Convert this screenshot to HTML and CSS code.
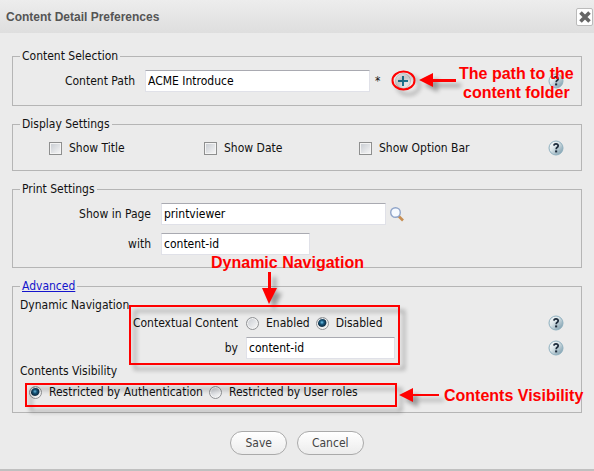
FILE: index.html
```html
<!DOCTYPE html>
<html lang="en">
<head>
<meta charset="utf-8">
<title>Content Detail Preferences</title>
<link rel="stylesheet" href="styles.css">
</head>
<body>
<svg class="defs" width="0" height="0" aria-hidden="true">
  <defs>
    <linearGradient id="ball" x1="0" y1="0" x2="1" y2="1">
      <stop offset="0" stop-color="#fff"/><stop offset=".4" stop-color="#dce6ea"/><stop offset="1" stop-color="#6d91a3"/>
    </linearGradient>
    <symbol id="help" viewBox="0 0 16 16">
      <circle cx="8" cy="8" r="7" fill="url(#ball)" stroke="#8fb0bf"/>
      <path d="M5.9 5.6Q6 3.9 8 3.9T10.2 5.7Q10.2 6.8 9 7.5Q8.2 8 8.2 9.3" fill="none" stroke="#1c2a3a" stroke-width="1.7"/>
      <rect x="7.1" y="10.4" width="2.1" height="2" fill="#1c2a3a"/>
    </symbol>
  </defs>
</svg>
<main class="dialog">
  <header class="titlebar">
    <h1>Content Detail Preferences</h1>
    <button class="close" type="button" aria-label="Close">
      <svg width="12" height="12" viewBox="0 0 12 12"><path d="M1.500 1.500L10.500 10.500M10.500 1.500L1.500 10.500" stroke="#666" stroke-width="3.6"/></svg>
    </button>
  </header>
  <form class="body">
    <fieldset>
      <legend>Content Selection</legend>
      <div class="row">
        <label class="label" for="path">Content Path</label>
        <input class="text wide" id="path" type="text" value="ACME Introduce">
        <span class="required">*</span>
        <button class="icon add" type="button" aria-label="Select path">
          <svg width="18" height="18" viewBox="0 0 18 18"><circle cx="9" cy="9" r="7.5" fill="#e2e2e2" stroke="#c4c4c4"/><path d="M9 4V14M4 9H14" stroke="#1d7590" stroke-width="2"/></svg>
        </button>
        <button class="icon help" type="button" aria-label="Help"><svg width="16" height="16"><use href="#help"/></svg></button>
      </div>
    </fieldset>
    <fieldset class="display">
      <legend>Display Settings</legend>
      <div class="row checks">
        <label class="check"><input type="checkbox">Show Title</label>
        <label class="check"><input type="checkbox">Show Date</label>
        <label class="check"><input type="checkbox">Show Option Bar</label>
        <button class="icon help" type="button" aria-label="Help"><svg width="16" height="16"><use href="#help"/></svg></button>
      </div>
    </fieldset>
    <fieldset class="print">
      <legend>Print Settings</legend>
      <div class="row">
        <label class="label" for="page">Show in Page</label>
        <input class="text wide" id="page" type="text" value="printviewer">
        <button class="icon search" type="button" aria-label="Search">
          <svg width="16" height="16" viewBox="0 0 16 16"><path d="M9.5 10L14 14.5" stroke="#c78e52" stroke-width="2.6"/><circle cx="6.5" cy="6.5" r="4.8" fill="#f6faff" stroke="#90a5c9" stroke-width="1.4"/></svg>
        </button>
      </div>
      <div class="row">
        <label class="label" for="with">with</label>
        <input class="text narrow" id="with" type="text" value="content-id">
      </div>
    </fieldset>
    <fieldset class="advanced">
      <legend><a href="#advanced">Advanced</a></legend>
      <h2>Dynamic Navigation</h2>
      <div class="row context">
        <span class="label">Contextual Content</span>
        <label class="radio"><input type="radio" name="context">Enabled</label>
        <label class="radio"><input type="radio" name="context" checked>Disabled</label>
        <button class="icon help" type="button" aria-label="Help"><svg width="16" height="16"><use href="#help"/></svg></button>
      </div>
      <div class="row">
        <label class="label" for="by">by</label>
        <input class="text narrow" id="by" type="text" value="content-id">
        <button class="icon help" type="button" aria-label="Help"><svg width="16" height="16"><use href="#help"/></svg></button>
      </div>
      <h2>Contents Visibility</h2>
      <div class="row visibility">
        <label class="radio"><input type="radio" name="visibility" checked>Restricted by Authentication</label>
        <label class="radio"><input type="radio" name="visibility">Restricted by User roles</label>
      </div>
    </fieldset>
    <div class="actions">
      <button class="btn" type="button">Save</button>
      <button class="btn" type="button">Cancel</button>
    </div>
  </form>
  <svg class="marks" width="594" height="471" viewBox="0 0 594 471" aria-hidden="true">
    <g fill="none" stroke="#f00" stroke-width="2">
      <ellipse cx="403.500" cy="80.500" rx="11" ry="9"/>
      <rect x="130" y="306" width="269" height="58"/>
      <rect x="26" y="384" width="370" height="22"/>
    </g>
    <g fill="#f00">
      <path d="M419 80L433 73V79H456V82H433V87Z"/>
      <path d="M269 304L262 288H268V272H271V288H277Z"/>
      <path d="M399 395L413 388V394H439V396H413V402Z"/>
    </g>
  </svg>
  <p class="note note-path">The path to the<br>content folder</p>
  <p class="note note-nav">Dynamic Navigation</p>
  <p class="note note-vis">Contents Visibility</p>
</main>
</body>
</html>
```
FILE: styles.css
```css
* { box-sizing: border-box; }
body {
  margin: 0;
  background: #ebebeb;
  color: #111;
  font: 12px/16px "DejaVu Sans Condensed", "Noto Sans", sans-serif;
}
.defs { position: absolute; }
.dialog {
  position: relative;
  min-height: 100vh;
  border-bottom: 2px solid #c0c0c0;
  overflow: hidden;
}
.titlebar {
  display: flex;
  align-items: center;
  justify-content: space-between;
  height: 33px;
  padding: 1px 1px 0 6px;
  background: linear-gradient(#ededed, #dedede);
}
h1 {
  margin: 0;
  color: #555;
  font: bold 12px/16px "Liberation Sans", sans-serif;
}
.close {
  display: grid;
  place-items: center;
  width: 17px;
  height: 18px;
  padding: 0;
  border: 1px solid #bbb;
  border-radius: 2px;
  background: #fff;
}
.body { padding: 15px 12px 0; }
fieldset {
  min-width: 0;
  margin: 0 0 10px;
  padding: 6px 17px 13px 7px;
  border: 1px solid #b5b5b5;
}
legend { padding: 0 2px; }
legend a { color: #1414cc; }
h2 { margin: 0; font: inherit; }
.row { display: flex; align-items: center; height: 22px; }
.label { width: 115px; margin-right: 10px; text-align: right; white-space: nowrap; }
.text {
  height: 22px;
  padding: 2px;
  border: 1px solid #e0e1e8;
  border-top-color: #a9aab1;
  background: #fff;
  color: #000;
  font: inherit;
}
.wide { width: 225px; }
.narrow { width: 149px; }
.required { width: 24px; padding-left: 5px; }
.icon { display: block; padding: 0; border: 0; background: none; }
.icon svg { display: block; }
.help { margin-left: auto; }
.display { padding-top: 5px; padding-bottom: 11px; }
.checks { padding-left: 29px; }
.check { display: flex; align-items: center; width: 155px; }
.check input {
  appearance: none;
  width: 13px;
  height: 13px;
  margin: 0 7px 0 0;
  border: 1px solid #8e8f8f;
  background: linear-gradient(135deg, #c6cad0, #f8f8f8);
  box-shadow: inset 0 0 0 1px #f4f4f4;
}
.print { padding-bottom: 12px; }
.print .label { width: 131px; }
.print .row + .row { margin-top: 8px; }
.search { margin-left: 3px; }
.advanced { padding-top: 3px; padding-bottom: 9px; margin-bottom: 18px; }
.advanced .label { width: 218px; margin-right: 8px; }
.context { height: 20px; margin-bottom: 4px; }
.row + h2 { margin-top: 4px; }
.visibility { margin-top: 2px; padding-left: 9px; }
.radio { display: flex; align-items: center; margin-right: 6px; white-space: nowrap; }
.radio input {
  appearance: none;
  width: 13px;
  height: 13px;
  margin: 0 7px 0 0;
  border: 1px solid #909295;
  border-radius: 50%;
  background: linear-gradient(135deg, #c6cad0, #fafafa);
  box-shadow: inset 0 0 0 1px #f4f4f4;
}
.radio input:checked { background: radial-gradient(circle at 45% 40%, #70c8ef 0, #18587e 2px, #0e3048 4px, #eee 5px); }
.actions { display: flex; justify-content: center; gap: 10px; }
.btn {
  height: 24px;
  padding: 0 14px;
  border: 1px solid #aaa;
  border-radius: 12px;
  background: linear-gradient(#fff, #ececec);
  color: #444;
  font: inherit;
}
.marks {
  position: absolute;
  top: 0;
  left: 0;
  pointer-events: none;
  filter: drop-shadow(5px 5px 2px rgba(0, 0, 0, .35));
}
.note {
  position: absolute;
  margin: 0;
  color: #f00;
  font: bold 16px/19px "Liberation Sans", sans-serif;
  text-align: center;
  white-space: nowrap;
}
.note-path { top: 64px; left: 459px; }
.note-nav { top: 253px; left: 211px; }
.note-vis { top: 386px; left: 444px; }
```
